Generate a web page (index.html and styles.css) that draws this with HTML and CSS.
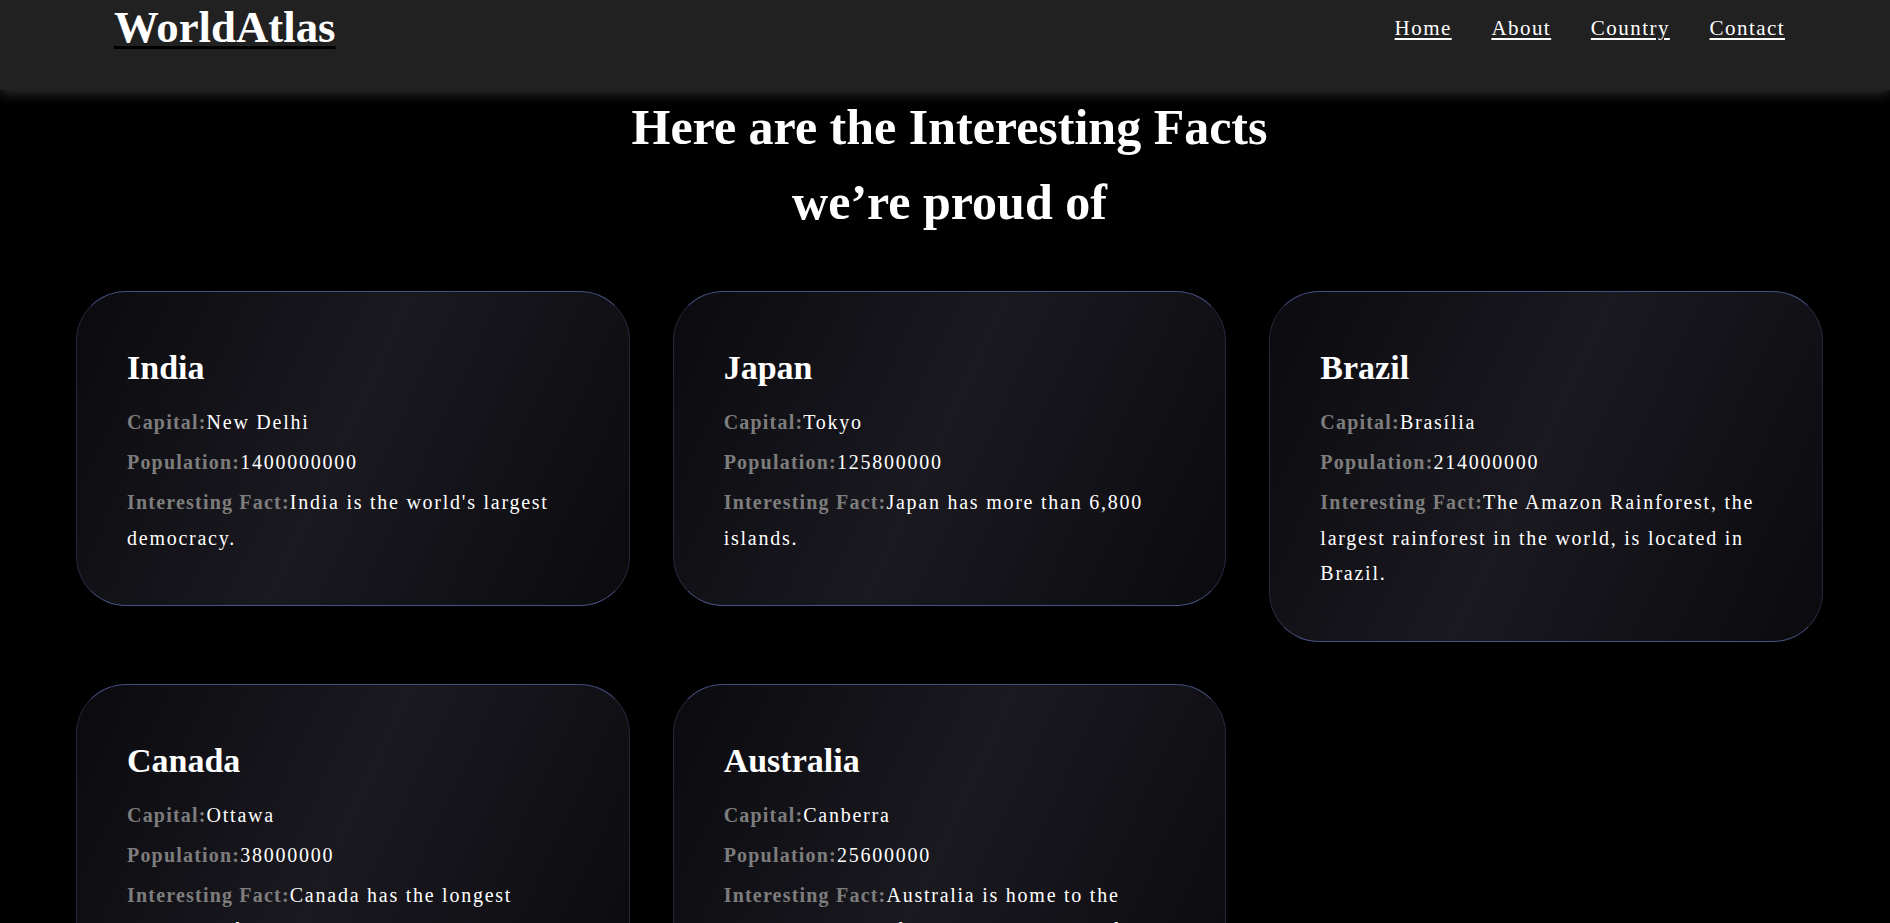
FILE: index.html
```html
<!DOCTYPE html>
<html lang="en">
<head>
<meta charset="utf-8">
<title>WorldAtlas</title>
<link rel="stylesheet" href="styles.css">
</head>
<body>
<header class="site-header">
  <div class="bar">
    <a class="logo" href="#"><span class="logo-text">WorldAtlas</span></a>
    <nav class="nav">
      <a href="#">Home</a>
      <a href="#">About</a>
      <a href="#">Country</a>
      <a href="#">Contact</a>
    </nav>
  </div>
</header>
<main class="facts">
  <h1 class="facts-title">Here are the Interesting Facts<br>we’re proud of</h1>
  <div class="grid">
    <article class="card">
      <h2>India</h2>
      <p><span class="label">Capital:</span>New Delhi</p>
      <p><span class="label">Population:</span>1400000000</p>
      <p><span class="label">Interesting Fact:</span>India is the world's largest democracy.</p>
    </article>
    <article class="card">
      <h2>Japan</h2>
      <p><span class="label">Capital:</span>Tokyo</p>
      <p><span class="label">Population:</span>125800000</p>
      <p><span class="label">Interesting Fact:</span>Japan has more than 6,800 islands.</p>
    </article>
    <article class="card">
      <h2>Brazil</h2>
      <p><span class="label">Capital:</span>Brasília</p>
      <p><span class="label">Population:</span>214000000</p>
      <p><span class="label">Interesting Fact:</span>The Amazon Rainforest, the largest rainforest in the world, is located in Brazil.</p>
    </article>
    <article class="card">
      <h2>Canada</h2>
      <p><span class="label">Capital:</span>Ottawa</p>
      <p><span class="label">Population:</span>38000000</p>
      <p><span class="label">Interesting Fact:</span>Canada has the longest coastline of any country in the world.</p>
    </article>
    <article class="card">
      <h2>Australia</h2>
      <p><span class="label">Capital:</span>Canberra</p>
      <p><span class="label">Population:</span>25600000</p>
      <p><span class="label">Interesting Fact:</span>Australia is home to the Great Barrier Reef, the largest coral reef system.</p>
    </article>
  </div>
</main>
</body>
</html>
```
FILE: styles.css
```css
html, body {
  margin: 0;
  padding: 0;
}
body {
  background: #000;
  color: #fff;
  font-family: "Liberation Serif", "Times New Roman", serif;
}
.site-header {
  height: 90px;
  box-sizing: border-box;
  background: #212121;
  padding: 2px 105px 0 114px;
  box-shadow: 0 3px 12px rgba(90, 90, 90, 0.55);
  position: relative;
  z-index: 1;
}
.bar {
  display: flex;
  align-items: center;
  justify-content: space-between;
}
.logo {
  color: #000;
  text-decoration: underline;
  text-decoration-color: #000;
  text-decoration-thickness: 3px;
  text-underline-offset: 4px;
  font-size: 44.8px;
  font-weight: bold;
  line-height: 1.15;
}
.logo-text {
  color: #fff;
}
.nav {
  display: flex;
  gap: 39.7px;
}
.nav a {
  color: #fff;
  font-size: 21px;
  letter-spacing: 1.45px;
  text-decoration: underline;
  text-underline-offset: 3px;
  line-height: 1.15;
}
.facts {
  padding: 0 67px 60px 76px;
}
.facts-title {
  margin: 0 0 51px;
  text-align: center;
  font-size: 50px;
  line-height: 75px;
  font-weight: bold;
}
.grid {
  display: grid;
  grid-template-columns: repeat(3, 1fr);
  gap: 42px 43px;
  align-items: start;
}
.card {
  border-radius: 50px;
  border: 1px solid;
  border-color: rgba(88, 100, 160, 0.75) rgba(50, 55, 85, 0.65) rgba(88, 100, 160, 0.8) rgba(50, 55, 85, 0.65);
  background: linear-gradient(115deg, #0b0a0e 0%, #1a1920 48%, #0b0a0e 100%);
  padding: 56px 50px 49px;
}
.card h2 {
  margin: 0 0 18px;
  font-size: 34px;
  line-height: 1.15;
  font-weight: bold;
}
.card p {
  margin: 0 0 4.5px;
  font-size: 20px;
  line-height: 35.5px;
  letter-spacing: 1.75px;
}
.card p:last-child {
  margin-bottom: 0;
}
.label {
  color: #7d7d7d;
  font-weight: bold;
  letter-spacing: 1.2px;
}
```
